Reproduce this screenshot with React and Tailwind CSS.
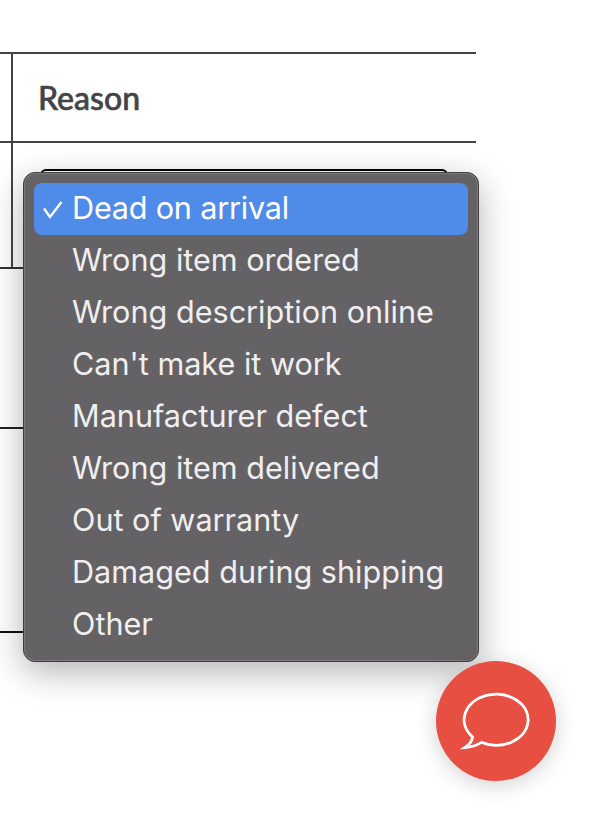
const reasons = [
  'Dead on arrival',
  'Wrong item ordered',
  'Wrong description online',
  "Can't make it work",
  'Manufacturer defect',
  'Wrong item delivered',
  'Out of warranty',
  'Damaged during shipping',
  'Other',
]

function ReasonMenu() {
  return (
    <div className="absolute left-[23px] top-[172px] w-[456px] h-[490px] px-[10px] py-[10px] rounded-[12px] border border-[#3f3d40] bg-[#656266] shadow-[inset_0_0_0_1px_#7d7b7e,0_10px_34px_rgba(0,0,0,0.3)] font-['Inter',sans-serif] text-[30.6px] text-[#f0eff0]">
      {reasons.map((r, i) => (
        <div
          key={r}
          className={`relative h-[52px] pl-[38px] pb-[3px] flex items-center rounded-[8px] whitespace-nowrap ${i === 0 ? 'bg-[#4f8be8] text-white' : ''}`}
        >
          {i === 0 && (
            <svg className="absolute left-[9px] top-[17px]" width="22" height="22" viewBox="0 0 22 22" fill="none">
              <path d="M1 8.500L7 17L18.500 2" stroke="white" strokeWidth="2.400" />
            </svg>
          )}
          <span className={i === 0 ? 'tracking-[-0.2px]' : ''}>{r}</span>
        </div>
      ))}
    </div>
  )
}

function ChatButton() {
  return (
    <div className="absolute left-[436px] top-[661px] w-[120px] h-[120px] rounded-full bg-[#e74f42] flex items-center justify-center shadow-[0_4px_22px_rgba(0,0,0,0.18)]">
      <svg width="72" height="64" viewBox="0 0 72 64" fill="none">
        <path
          d="M21.500 53.400A32 25.500 0 1 0 12.600 48Q12 54 5 58.500Q14 58 21.500 53.400Z"
          stroke="white"
          strokeWidth="2.800"
        />
      </svg>
    </div>
  )
}

export default function App() {
  return (
    <div className="relative h-[821px] w-[595px] overflow-hidden bg-white font-['Lato',sans-serif]">
      <div className="pt-[52px] w-[476px]">
        <div className="flex h-[91px] border-y-2 border-[#444]">
          <div className="w-[13px] border-r-2 border-[#444]" />
          <div className="pl-[25px] flex items-center text-[32px] font-medium text-[#444] [-webkit-text-stroke:0.6px_#444]">Reason</div>
        </div>
        <div className="flex h-[126px] border-b-2 border-[#333]">
          <div className="w-[13px] border-r-2 border-[#444]" />
          <div className="pl-[27px] pt-[26px] flex-1">
            <div className="w-[408px] h-[60px] rounded-[6px] border-2 border-black" />
          </div>
        </div>
        <div className="h-[160px] border-b-2 border-[#222]" />
        <div className="h-[204px] border-b-2 border-[#111]" />
      </div>
      <ReasonMenu />
      <ChatButton />
    </div>
  )
}
